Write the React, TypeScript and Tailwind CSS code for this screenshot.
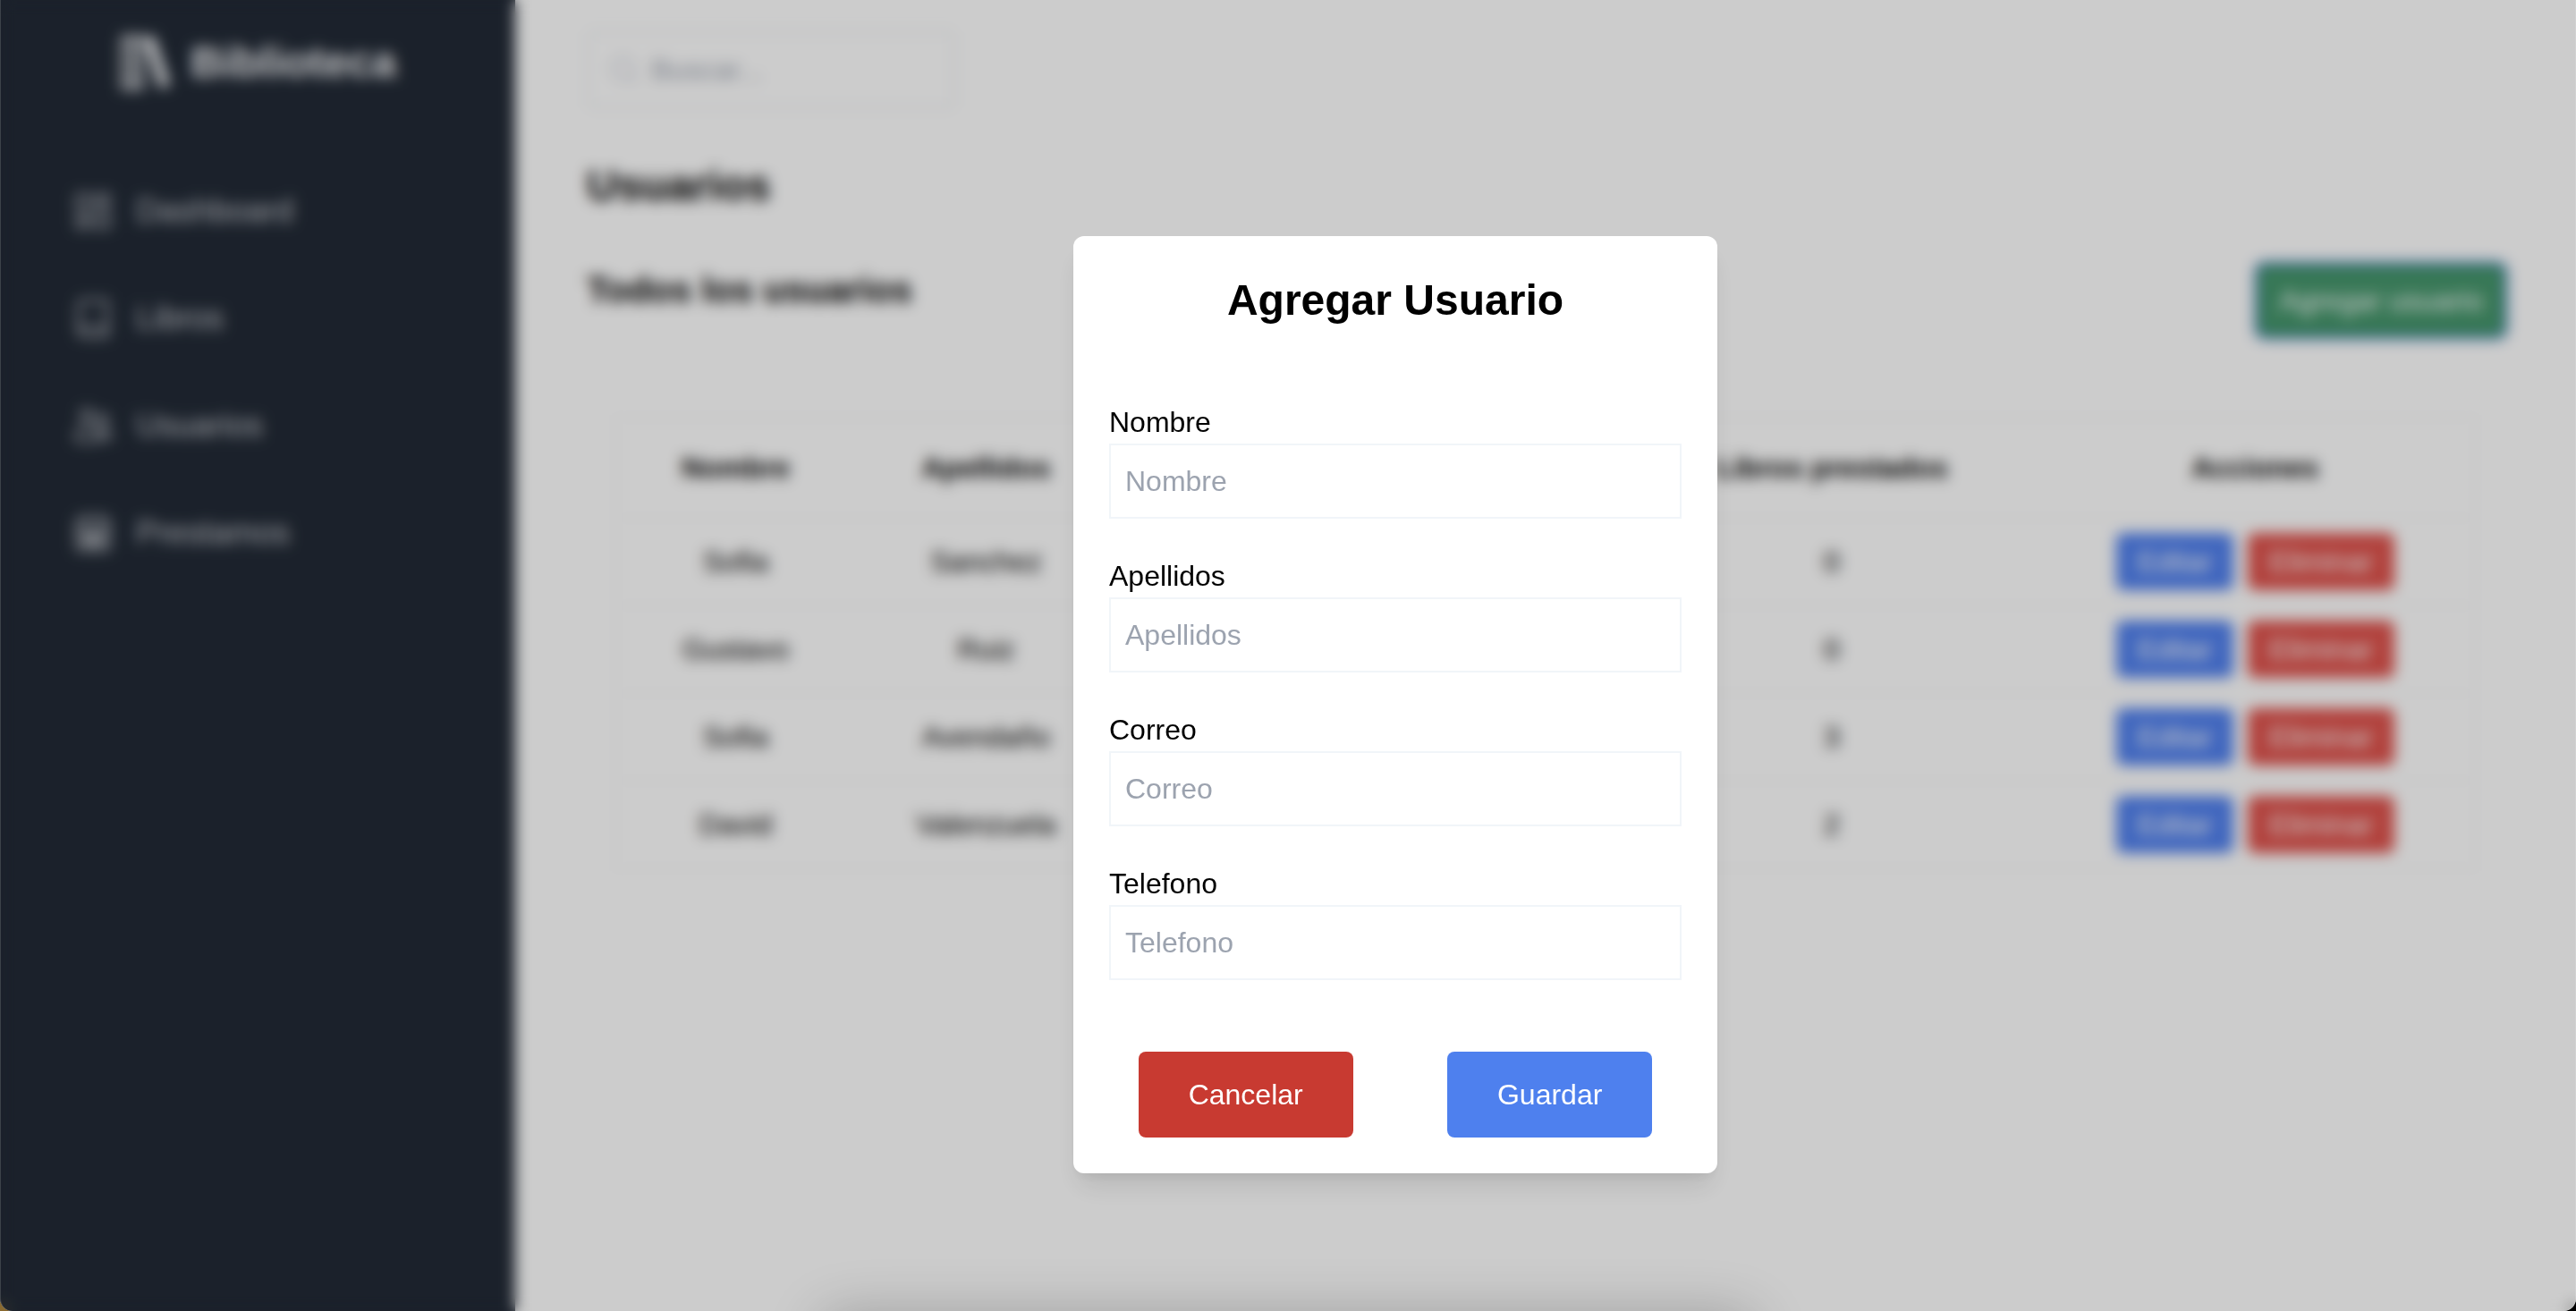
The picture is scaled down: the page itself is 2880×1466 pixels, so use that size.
import { HiOutlineUsers } from "react-icons/hi2";
import { Book, LayoutDashboard, Search } from "lucide-react";

function BooksLogo({ className }: { className?: string }) {
  return (
    <svg viewBox="0 0 60 64" className={className} aria-hidden="true">
      <g fill="none" stroke="currentColor" strokeWidth="4" strokeLinejoin="round">
        <rect x="4" y="4" width="10" height="56" />
        <rect x="16" y="4" width="10" height="56" />
      </g>
      <path d="M28 4.500 39 2l18 55-11 4z" fill="currentColor" />
    </svg>
  );
}

function CalendarIcon({ className }: { className?: string }) {
  return (
    <svg
      viewBox="0 0 24 24"
      fill="none"
      stroke="currentColor"
      strokeWidth="1.5"
      strokeLinecap="round"
      className={className}
      aria-hidden="true"
    >
      <rect x="3" y="4" width="18" height="17.5" rx="2" />
      <path d="M8 2v4M16 2v4M3 10h18" />
      <path d="M7 13.5h2M11 13.5h2M15 13.5h2M7 17.5h2M11 17.5h2M15 17.5h2" strokeWidth="3" />
    </svg>
  );
}

const navItems = [
  { label: "Dashboard", Icon: LayoutDashboard },
  { label: "Libros", Icon: Book },
  { label: "Usuarios", Icon: HiOutlineUsers },
  { label: "Prestamos", Icon: CalendarIcon },
];

const users = [
  { nombre: "Sofia", apellidos: "Sanchez", prestados: 0 },
  { nombre: "Gustavo", apellidos: "Ruiz", prestados: 0 },
  { nombre: "Sofia", apellidos: "Avendaño", prestados: 3 },
  { nombre: "David", apellidos: "Valenzuela", prestados: 2 },
];

const fields = ["Nombre", "Apellidos", "Correo", "Telefono"];

function Sidebar() {
  return (
    <aside className="w-[576px] shrink-0 bg-[#222a36] px-20 pt-8 text-[#c3c6cc]">
      <div className="flex items-center justify-center gap-5 pb-[68px] text-[#f3f4f6]">
        <BooksLogo className="h-16 w-15" />
        <span className="text-[48px] leading-[76px] font-bold">Biblioteca</span>
      </div>
      <nav className="flex flex-col">
        {navItems.map(({ label, Icon }) => (
          <a
            key={label}
            href="#"
            className="flex items-center gap-6 py-8 text-[36px] leading-[56px]"
          >
            <Icon className="size-12 stroke-[1.5]" />
            {label}
          </a>
        ))}
      </nav>
    </aside>
  );
}

function UserTable() {
  return (
    <table className="w-full table-fixed border-collapse border-2 border-[#f7f7f8] text-center text-[32px] leading-[48px]">
      <thead>
        <tr className="h-28 border-2 border-[#f7f7f8]">
          <th className="w-[12.8%]">Nombre</th>
          <th className="w-[14.2%]">Apellidos</th>
          <th className="w-[14%]">Correo</th>
          <th className="w-[13.4%]">Telefono</th>
          <th className="w-[22%]">Libros prestados</th>
          <th>Acciones</th>
        </tr>
      </thead>
      <tbody>
        {users.map((u) => (
          <tr key={u.apellidos} className="border-2 border-[#f7f7f8]">
            <td>{u.nombre}</td>
            <td>{u.apellidos}</td>
            <td />
            <td />
            <td>{u.prestados}</td>
            <td className="py-4">
              <div className="flex justify-center gap-4 text-white">
                <button type="button" className="rounded-lg bg-[#5080ee] px-6 py-2">
                  Editar
                </button>
                <button type="button" className="rounded-lg bg-[#de524c] px-6 py-2">
                  Eliminar
                </button>
              </div>
            </td>
          </tr>
        ))}
      </tbody>
    </table>
  );
}

function AddUserDialog() {
  return (
    <form
      role="dialog"
      aria-labelledby="dialog-title"
      className="w-[720px] rounded-xl bg-white p-10 shadow-[0_20px_30px_-6px_rgba(0,0,0,0.1),0_8px_12px_-4px_rgba(0,0,0,0.06)]"
    >
      <h2 id="dialog-title" className="mb-20 text-center text-[48px] leading-[64px] font-bold">
        Agregar Usuario
      </h2>
      {fields.map((f) => (
        <div key={f} className="mb-10 flex flex-col">
          <label htmlFor={f}>{f}</label>
          <input
            id={f}
            type="text"
            placeholder={f}
            className="border-2 border-[#f1f5f9] p-4 placeholder:text-[#9ca3af]"
          />
        </div>
      ))}
      <div className="flex justify-around gap-10 pt-10 text-white">
        <button type="button" className="rounded-lg bg-[#c83a31] px-14 py-6">
          Cancelar
        </button>
        <button type="submit" className="rounded-lg bg-[#4e80ee] px-14 py-6">
          Guardar
        </button>
      </div>
    </form>
  );
}

export default function App() {
  return (
    <div className="bg-linear-to-r from-[#8a6a30] to-black">
      <div className="relative flex min-h-screen overflow-hidden rounded-b-[14px] bg-white font-['Liberation_Sans',Arial,sans-serif] text-[32px] leading-[48px] text-black">
        <Sidebar />
        <main className="min-w-0 flex-1 px-20 pt-[34px]">
          <label className="flex w-[412px] items-center gap-3 rounded-lg border-4 border-[#f3f5f7] px-5 py-4">
            <Search className="size-9 shrink-0 text-[#cfd3dc]" />
            <input
              type="text"
              aria-label="Buscar"
              placeholder="Buscar..."
              className="w-full min-w-0 placeholder:text-[#9ca3af]"
            />
          </label>
          <h1 className="mt-[54px] text-[48px] leading-[64px] font-bold">Usuarios</h1>
          <div className="mt-14 flex items-start justify-between">
            <h2 className="text-[40px] leading-[56px] font-bold">Todos los usuarios</h2>
            <button
              type="button"
              className="rounded-lg bg-[#46966c] px-6 py-4 text-white ring-3 ring-[#1f5fd0]"
            >
              Agregar usuario
            </button>
          </div>
          <div className="px-8 pt-[90px]">
            <UserTable />
          </div>
        </main>

        <div className="absolute inset-0 flex items-center justify-center bg-black/20 pt-[110px] pl-60 backdrop-blur-sm">
          <AddUserDialog />
        </div>
        <div className="pointer-events-none absolute inset-x-[920px] -bottom-14 h-12 rounded-full shadow-[0_0_60px_6px_rgba(0,0,0,0.22)]" />
        <div className="pointer-events-none absolute inset-0 rounded-b-[14px] border-x border-white/15" />
      </div>
    </div>
  );
}
